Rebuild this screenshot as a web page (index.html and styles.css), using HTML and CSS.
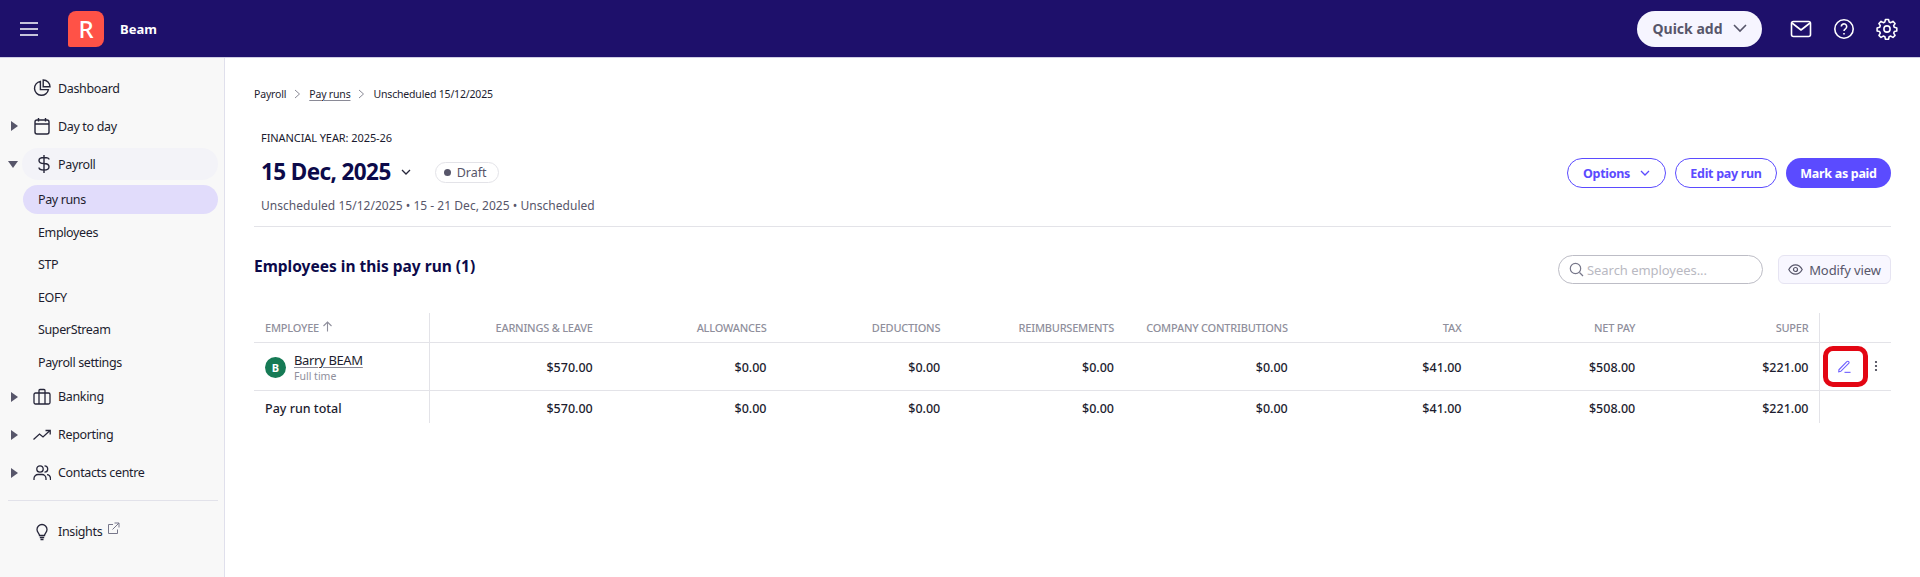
FILE: index.html
```html
<!DOCTYPE html>
<html lang="en">
<head>
<meta charset="utf-8">
<title>Beam - Pay run</title>
<link rel="stylesheet" href="styles.css">
</head>
<body>
<header class="topbar">
  <div class="topbar-left">
    <svg class="burger" width="20" height="16" viewBox="0 0 20 16"><path d="M1 2h18M1 8h18M1 14h18" stroke="#fff" stroke-width="1.6" fill="none"/></svg>
    <div class="logo">R</div>
    <span class="brand">Beam</span>
  </div>
  <div class="topbar-right">
    <button class="quick">Quick add
      <svg width="14" height="9" viewBox="0 0 14 9"><path d="M1 1l6 6 6-6" stroke="#57566a" stroke-width="1.6" fill="none"/></svg>
    </button>
    <svg class="ti" width="22" height="22" viewBox="0 0 22 22" fill="none" stroke="#fff" stroke-width="1.6" stroke-linejoin="round"><rect x="1.5" y="3.500" width="19" height="15" rx="2"/><path d="M2 5l9 7 9-7"/></svg>
    <svg class="ti" width="22" height="22" viewBox="0 0 22 22" fill="none" stroke="#fff" stroke-width="1.6"><circle cx="11" cy="11" r="9.200"/><path d="M8.300 8.600a2.700 2.700 0 1 1 4.200 2.200c-.9.600-1.500 1-1.500 2.200"/><path d="M11 15v1.400"/></svg>
    <svg class="ti" width="22" height="22" viewBox="0 0 24 24" fill="none" stroke="#fff" stroke-width="1.700" stroke-linejoin="round"><path d="M10.300 2.200h3.400l.6 2.700 1.800.8 2.400-1.500 2.300 2.400-1.500 2.400.7 1.800 2.700.6v3.300l-2.700.6-.7 1.800 1.500 2.400-2.300 2.300-2.400-1.500-1.800.8-.6 2.700h-3.400l-.6-2.700-1.800-.8-2.400 1.500-2.300-2.300 1.500-2.400-.8-1.800-2.700-.6v-3.300l2.700-.6.8-1.800-1.500-2.400 2.300-2.400 2.400 1.500 1.800-.8z" transform="translate(0 -.6)"/><circle cx="12" cy="12" r="3.400"/></svg>
  </div>
</header>

<div class="shell">
  <nav class="sidebar">
    <div class="nav-item"><span class="caret"></span><svg class="ni" width="18" height="18" viewBox="0 0 18 18" fill="none" stroke="#26263a" stroke-width="1.400"><path d="M7.400 2.400a7 7 0 1 0 8 8.200H7.400z"/><path d="M10.200 1a6.800 6.800 0 0 1 6.800 6.800h-6.800z"/></svg><span>Dashboard</span></div>
    <div class="nav-item"><span class="caret right"></span><svg class="ni" width="18" height="18" viewBox="0 0 18 18" fill="none" stroke="#26263a" stroke-width="1.400"><rect x="2" y="3" width="14" height="14" rx="2"/><path d="M2 7h14M5.500 1v3.500M12.500 1v3.500"/></svg><span>Day to day</span></div>
    <div class="nav-item open"><span class="caret down"></span><span class="nav-pill"><svg class="ni" width="18" height="20" viewBox="0 0 18 20" fill="none" stroke="#26263a" stroke-width="1.400"><path d="M9 1v18M14 5.500C14 4 12.500 3.500 9 3.500S4 4.600 4 6.500 5.500 9.500 9 9.500s5 1.200 5 3.200-1.500 3.300-5 3.300-5-.8-5-2.500"/></svg><span>Payroll</span></span></div>
    <div class="sub-list">
      <a class="sub active">Pay runs</a>
      <a class="sub">Employees</a>
      <a class="sub">STP</a>
      <a class="sub">EOFY</a>
      <a class="sub">SuperStream</a>
      <a class="sub">Payroll settings</a>
    </div>
    <div class="nav-item"><span class="caret right"></span><svg class="ni" width="18" height="18" viewBox="0 0 18 18" fill="none" stroke="#26263a" stroke-width="1.300"><rect x="1" y="5" width="16" height="11" rx="1.500"/><path d="M6 16V2.500a1 1 0 0 1 1-1h4a1 1 0 0 1 1 1V16"/></svg><span>Banking</span></div>
    <div class="nav-item"><span class="caret right"></span><svg class="ni" width="18" height="18" viewBox="0 0 18 18" fill="none" stroke="#26263a" stroke-width="1.300"><path d="M0.500 13.500l6-5.500 3.500 3 7-6.500"/><path d="M12.500 4.500h4.700v4"/></svg><span>Reporting</span></div>
    <div class="nav-item"><span class="caret right"></span><svg class="ni" width="18" height="18" viewBox="0 0 18 18" fill="none" stroke="#26263a" stroke-width="1.300"><circle cx="7" cy="5" r="3.200"/><path d="M1 16v-1.500A4 4 0 0 1 5 10.500h4a4 4 0 0 1 4 4V16"/><path d="M11.500 1.800a3.200 3.200 0 0 1 0 6.400M14 10.700a4 4 0 0 1 3.500 3.800V16"/></svg><span>Contacts centre</span></div>
    <div class="nav-sep"></div>
    <div class="nav-item"><span class="caret"></span><svg class="ni" width="18" height="18" viewBox="0 0 18 18" fill="none" stroke="#26263a" stroke-width="1.300"><path d="M6.500 12.500c0-2-2.500-3-2.500-6a5 5 0 0 1 10 0c0 3-2.500 4-2.500 6z"/><path d="M6.800 14.500h4.400M7.500 16.500h3"/></svg><span>Insights</span><svg class="ext" width="13" height="13" viewBox="0 0 13 13" fill="none" stroke="#77778a" stroke-width="1"><path d="M6 2.500H1.500v9h9V7.500M7.500 1h4.500v4.500M12 1L5.500 7.500"/></svg></div>
  </nav>

  <main class="content">
    <div class="crumbs">
      <span>Payroll</span>
      <svg width="7" height="10" viewBox="0 0 7 10"><path d="M1 1l4.500 4L1 9" stroke="#8a8a96" fill="none"/></svg>
      <a>Pay runs</a>
      <svg width="7" height="10" viewBox="0 0 7 10"><path d="M1 1l4.500 4L1 9" stroke="#8a8a96" fill="none"/></svg>
      <span>Unscheduled 15/12/2025</span>
    </div>

    <section class="run-head">
      <div class="run-info">
        <div class="fy">FINANCIAL YEAR: 2025-26</div>
        <div class="title-row">
          <h1>15 Dec, 2025</h1>
          <svg width="10" height="7" viewBox="0 0 10 7"><path d="M1 1l4 4 4-4" stroke="#26263a" stroke-width="1.300" fill="none"/></svg>
          <span class="status"><i></i>Draft</span>
        </div>
        <div class="run-sub">Unscheduled 15/12/2025 • 15 - 21 Dec, 2025 • Unscheduled</div>
      </div>
      <div class="run-actions">
        <button class="btn outline">Options <svg width="10" height="7" viewBox="0 0 10 7"><path d="M1 1l4 4 4-4" stroke="#5b4bff" stroke-width="1.300" fill="none"/></svg></button>
        <button class="btn outline">Edit pay run</button>
        <button class="btn solid">Mark as paid</button>
      </div>
    </section>

    <section class="list-head">
      <h2>Employees in this pay run (1)</h2>
      <div class="list-tools">
        <div class="search">
          <svg width="15" height="15" viewBox="0 0 15 15" fill="none" stroke="#77778a" stroke-width="1.200"><circle cx="6.500" cy="6.500" r="5.200"/><path d="M10.500 10.500l3.500 3.500"/></svg>
          <span>Search employees...</span>
        </div>
        <button class="modify">
          <svg width="15" height="11" viewBox="0 0 15 11" fill="none" stroke="#57566a" stroke-width="1.200"><path d="M.8 5.500C2.500 2.300 4.800.8 7.500.8s5 1.500 6.700 4.700c-1.700 3.200-4 4.700-6.700 4.700S2.500 8.700.8 5.500z"/><circle cx="7.500" cy="5.500" r="2"/></svg>
          Modify view
        </button>
      </div>
    </section>

    <table class="grid">
      <colgroup><col class="c-emp"><col span="8" class="c-num"><col></colgroup>
      <thead>
        <tr>
          <th class="first">EMPLOYEE <svg width="11" height="11" viewBox="0 0 11 11" fill="none" stroke="#8f8f9c" stroke-width="1.100"><path d="M5.500 10.500V1M1.500 5l4-4 4 4"/></svg></th>
          <th>EARNINGS &amp; LEAVE</th><th>ALLOWANCES</th><th>DEDUCTIONS</th><th>REIMBURSEMENTS</th><th>COMPANY CONTRIBUTIONS</th><th>TAX</th><th>NET PAY</th><th>SUPER</th><th class="act"></th>
        </tr>
      </thead>
      <tbody>
        <tr class="row">
          <td class="first">
            <div class="emp"><span class="avatar">B</span><div><a class="emp-name">Barry BEAM</a><div class="emp-type">Full time</div></div></div>
          </td>
          <td>$570.00</td><td>$0.00</td><td>$0.00</td><td>$0.00</td><td>$0.00</td><td>$41.00</td><td>$508.00</td><td>$221.00</td>
          <td class="act">
            <div class="act-wrap">
              <span class="edit"><svg width="13" height="13" viewBox="0 0 14 14" fill="none" stroke="#6f61ff" stroke-width="1.200"><path d="M1 10.500L9.500 1.800a1.300 1.300 0 0 1 2 0 1.300 1.300 0 0 1 0 1.900L3 12.200l-2.200.4z"/><path d="M7 13.300h6.500"/></svg><span class="highlight"></span></span>
              <svg class="more" width="4" height="12" viewBox="0 0 4 12" fill="#3a3a4a"><circle cx="2" cy="2" r="1.100"/><circle cx="2" cy="6" r="1.100"/><circle cx="2" cy="10" r="1.100"/></svg>
            </div>
          </td>
        </tr>
        <tr class="total">
          <td class="first">Pay run total</td>
          <td>$570.00</td><td>$0.00</td><td>$0.00</td><td>$0.00</td><td>$0.00</td><td>$41.00</td><td>$508.00</td><td>$221.00</td><td class="act"></td>
        </tr>
      </tbody>
    </table>
  </main>
</div>
</body>
</html>
```

FILE: styles.css
```css
* { box-sizing: border-box; }
html, body { margin: 0; height: 100%; }
body { font-family: "Noto Sans", sans-serif; color: #1a1a2e; background: #fff; overflow: hidden; font-size: 12px; }
button { font-family: inherit; cursor: pointer; }

.topbar { height: 58px; background: #1e106b; border-bottom: 1px solid #cfcde4; display: flex; align-items: center; justify-content: space-between; padding: 0 22px 0 19px; }
.topbar-left { display: flex; align-items: center; }
.logo { width: 36px; height: 36px; margin-left: 29px; background: #ff5247; border-radius: 8px 8px 8px 2px; color: #fff; font-size: 24px; font-weight: 500; display: flex; align-items: center; justify-content: center; }
.brand { margin-left: 16px; color: #fff; font-size: 13px; font-weight: 700; }
.topbar-right { display: flex; align-items: center; }
.quick { width: 125px; height: 36px; border: 0; border-radius: 18px; background: #f6f5ff; color: #57566a; font-size: 14px; font-weight: 700; display: flex; align-items: center; justify-content: center; gap: 10px; padding: 0; }
.ti { margin-left: 21px; }
.ti:first-of-type { margin-left: 28px; }

.shell { display: flex; height: 519px; }
.sidebar { width: 225px; flex: none; background: #f8f8f8; border-right: 1px solid #e0e0ec; padding: 11px 6px 0 8px; font-size: 12.500px; letter-spacing: -0.35px; color: #1d1d2f; }
.nav-item { height: 38px; display: flex; align-items: center; }
.caret { width: 8px; height: 10px; margin-right: 10px; flex: none; }
.caret.right { border-left: 7px solid #57566a; border-top: 5px solid transparent; border-bottom: 5px solid transparent; width: 0; margin-left: 3px; margin-right: 15px; }
.caret.down { border-top: 7px solid #57566a; border-left: 5px solid transparent; border-right: 5px solid transparent; width: 0; height: 0; margin-right: 4px; }
.ni { flex: none; margin-left: 7px; margin-right: 7px; }
.caret.right + .ni { margin-left: 0; }
.nav-pill { flex: 1; height: 32px; border-radius: 16px; background: #f3f3f8; display: flex; align-items: center; }
.nav-pill .ni { margin-left: 13px; margin-right: 5px; }
.sub-list { margin: 2px 0 -1px 15px; }
.sub { height: 32.500px; display: flex; align-items: center; padding-left: 15px; border-radius: 16px; font-size: 12.500px; letter-spacing: -0.37px; }
.sub.active { background: #e1dcfb; height: 29px; margin-bottom: 2px; margin-top: 2px; }
.nav-sep { height: 1px; background: #e2e2ea; margin: 8px 0 12px 0; }
.ext { margin-left: 5px; margin-top: -6px; }

.content { flex: 1; padding: 28px 29px 0; min-width: 0; }
.crumbs { display: flex; align-items: center; gap: 8px; font-size: 10.500px; letter-spacing: -0.18px; color: #1d1d2f; height: 16px; }
.crumbs a { text-decoration: underline; text-underline-offset: 2px; text-decoration-color: #8a8a96; }

.run-head { margin-top: 27px; padding: 1px 0 0 7px; height: 98px; border-bottom: 1px solid #e3e3e8; display: flex; align-items: flex-start; justify-content: space-between; }
.fy { font-size: 11px; line-height: 15px; letter-spacing: -0.08px; }
.title-row { display: flex; align-items: center; margin-top: 10px; }
h1 { margin: 0; font-size: 22.500px; letter-spacing: -0.6px; font-weight: 700; color: #0c0a4a; line-height: 34px; }
.title-row svg { margin-left: 10px; }
.status { margin-left: 24px; height: 21px; width: 64px; border: 1px solid #e3e3e8; border-radius: 11px; padding: 0 0 0 8px; font-size: 12.500px; color: #57566a; display: flex; align-items: center; gap: 6px; }
.status i { width: 7px; height: 7px; border-radius: 50%; background: #57566a; }
.run-sub { margin-top: 9px; font-size: 12px; line-height: 16px; letter-spacing: 0.03px; color: #57566a; }
.run-actions { display: flex; gap: 9px; margin-top: 28px; }
.btn { height: 30px; border-radius: 15px; font-size: 12.500px; letter-spacing: -0.3px; font-weight: 700; padding: 0; }
.outline { background: #fff; border: 1px solid #5b4bff; color: #5b4bff; }
.outline:first-child { width: 99px; display: flex; align-items: center; justify-content: center; gap: 10px; }
.outline:nth-child(2) { width: 102px; }
.solid { width: 105px; background: #5b4bff; border: 0; color: #fff; }

.list-head { display: flex; justify-content: space-between; align-items: flex-start; margin-top: 24px; height: 30px; }
h2 { margin: 0; font-size: 15.500px; line-height: 30px; font-weight: 700; color: #0c0a4a; }
.list-tools { display: flex; gap: 15px; margin-top: 4px; }
.search { width: 205px; height: 29px; border: 1px solid #bdbdc6; border-radius: 15px; display: flex; align-items: center; gap: 3px; padding-left: 10px; font-size: 13px; letter-spacing: -0.05px; color: #b9b9c2; }
.modify { width: 113px; height: 29px; border: 1px solid #e6e4f2; border-radius: 6px; background: #f8f7ff; color: #57566a; font-size: 13px; letter-spacing: -0.1px; display: flex; align-items: center; justify-content: center; gap: 6px; padding: 0; }

.grid { width: 1637px; margin-top: 32px; border-collapse: collapse; table-layout: fixed; }
.c-emp { width: 175px; }
.c-num { width: 173.750px; }
th, td { text-align: right; padding: 0 10px; }
th { height: 29px; font-size: 11px; letter-spacing: -0.22px; font-weight: 500; color: #8f8f9c; border-bottom: 1px solid #e3e3e8; }
td { font-size: 12.500px; font-weight: 500; color: #1d1d2f; }
.first { text-align: left; border-right: 1px solid #e3e3e8; padding-left: 11px; }
.act { border-left: 1px solid #e3e3e8; padding: 0; }
.row td { height: 48px; padding-top: 2px; border-bottom: 1px solid #e3e3e8; }
.row td.act { padding-top: 0; }
.total td { height: 33px; padding-top: 4px; }
.emp { display: flex; align-items: center; gap: 8px; }
.avatar { width: 21px; height: 21px; border-radius: 50%; background: #167a55; color: #fff; font-size: 11px; font-weight: 700; display: flex; align-items: center; justify-content: center; }
.emp-name { font-size: 13px; letter-spacing: -0.35px; font-weight: 400; line-height: 16px; display: block; text-decoration: underline; text-underline-offset: 2px; text-decoration-color: #8a8a96; }
.emp-type { font-size: 10.500px; font-weight: 400; color: #8f8f9c; line-height: 14px; margin-top: 1px; }
.act-wrap { display: flex; align-items: center; }
.edit { position: relative; width: 49px; height: 30px; display: flex; align-items: center; justify-content: center; }
.highlight { position: absolute; left: 3px; top: -5px; width: 45px; height: 41px; border: 5px solid #e30613; border-radius: 10px; }
.more { margin-left: 5px; }
```
